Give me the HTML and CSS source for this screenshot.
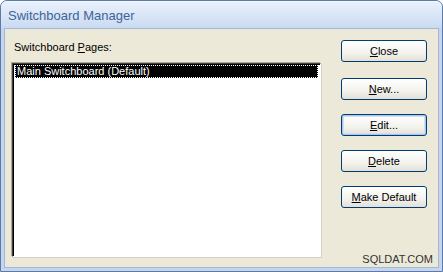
FILE: index.html
```html
<!DOCTYPE html>
<html lang="en">
<head>
  <meta charset="UTF-8" />
  <title>Switchboard Manager</title>
  <link rel="stylesheet" href="styles.css">
</head>
<body>

  <div class="window">
    <div class="titlebar">Switchboard Manager</div>

    <div class="client">
      <div class="left-col">
        <div class="label">Switchboard <u>P</u>ages:</div>
        <div class="listbox">
          <div class="item selected">Main Switchboard (Default)</div>
        </div>
      </div>

      <div class="right-col">
        <button class="btn first"><u>C</u>lose</button>
        <button class="btn"><u>N</u>ew...</button>
        <button class="btn default"><u>E</u>dit...</button>
        <button class="btn"><u>D</u>elete</button>
        <button class="btn"><u>M</u>ake Default</button>
      </div>
    </div>

    <!-- watermark -->
    <div class="watermark">SQLDAT.COM</div>
  </div>

</body>
</html>
```

FILE: styles.css
```css
body {
  margin: 0;
  padding: 0;
  background: #ffffff;
  font-family: 'Liberation Sans', Arial, sans-serif;
}

.window {
  position: relative;
  width: 443px;
  height: 272px;
  box-sizing: border-box;
  border: 1px solid #5a7aa8;
  border-radius: 7px 7px 0 0;
  background: #c4d5ed;
  display: flex;
  flex-direction: column;
  overflow: hidden;
}

.titlebar {
  height: 27px;
  flex-shrink: 0;
  box-sizing: border-box;
  padding: 0 0 0 7px;
  line-height: 27px;
  font-size: 13px;
  color: #3e649a;
  background: linear-gradient(to bottom, #e9f1fb, #dae6f6 50%, #c9daf1);
  border-top: 1px solid #f4f8fd;
}

.client {
  flex: 1;
  margin: 0 3px 3px 3px;
  border: 1px solid #a3b8d6;
  background: #ece9d8;
  display: flex;
  padding: 10px 10px 10px 7px;
  font-size: 11px;
  color: #000000;
}

.left-col {
  display: flex;
  flex-direction: column;
  width: 309px;
}

.label {
  height: 13px;
  line-height: 13px;
  padding: 2px 0 0 2px;
  margin-bottom: 9px;
}

.listbox {
  flex: 1;
  background: #ffffff;
  border-style: solid;
  border-width: 1px;
  border-color: #404040 #ffffff #ffffff #404040;
  box-shadow: inset 1px 1px 0 #000000, 1px 1px 0 #d4d0c8, -1px -1px 0 #aca899;
  padding: 1px 2px 0 2px;
}

.item {
  height: 13px;
  line-height: 13px;
  padding: 0 2px;
  white-space: nowrap;
}

.item.selected {
  background: #000000;
  color: #ffffff;
  outline: 1px dotted #ffffff;
  outline-offset: -1px;
}

.right-col {
  display: flex;
  flex-direction: column;
  gap: 14px;
  margin-left: 20px;
  padding-top: 1px;
}

.btn {
  width: 86px;
  height: 22px;
  padding: 0;
  font-family: 'Liberation Sans', Arial, sans-serif;
  font-size: 11px;
  color: #000000;
  border: 1px solid #003c74;
  border-radius: 3px;
  background: linear-gradient(to bottom, #ffffff, #f3f2ec 60%, #e2e0d6);
  cursor: pointer;
}

.btn.first {
  margin-bottom: 2px;
}

.btn.default {
  box-shadow: inset 0 0 0 1px #a9c6ef, inset 0 0 0 2px #cfdef5;
}

.watermark {
  position: absolute;
  right: 9px;
  bottom: 6px;
  font-size: 11px;
  color: #333333;
}
```
